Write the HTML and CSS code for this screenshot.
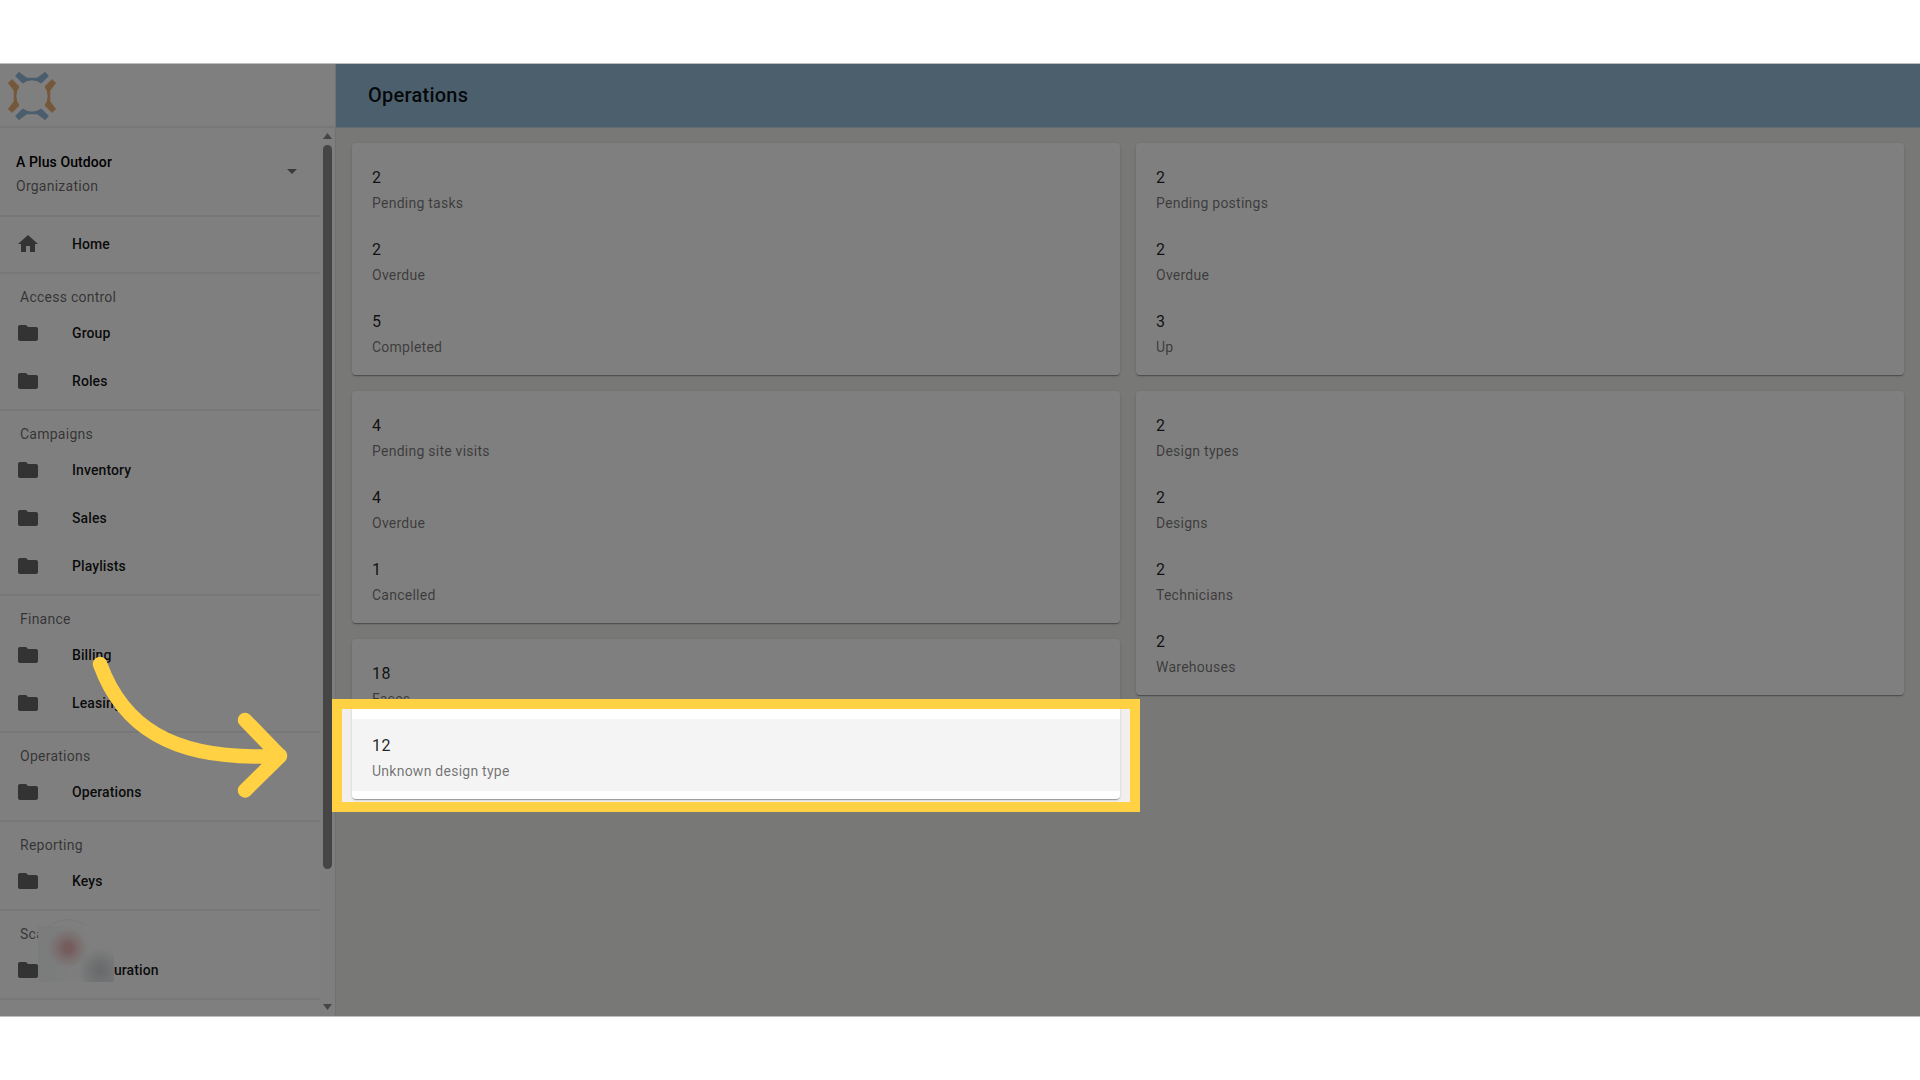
FILE: index.html
```html
<!DOCTYPE html>
<html lang="en">
<head>
<meta charset="utf-8">
<title>Operations</title>
<link rel="stylesheet" href="styles.css">
</head>
<body>
<svg class="defs" width="0" height="0">
  <symbol id="folder" viewBox="0 0 24 24"><path d="M10 4H4c-1.1 0-2 .9-2 2v12c0 1.100.9 2 2 2h16c1.100 0 2-.9 2-2V8c0-1.100-.9-2-2-2h-8l-2-2z"/></symbol>
  <symbol id="home" viewBox="0 0 24 24"><path d="M10 20v-6h4v6h5v-8h3L12 3 2 12h3v8z"/></symbol>
</svg>
<div class="app">
  <aside class="sidebar">
    <div class="brand">
      <svg class="logo" width="50" height="50" viewBox="-25 -25 50 50">
        <defs><path id="arm" d="M-13 -23.200L-5.600 -17.600H5.600L13 -23.200L15.900 -20L9.300 -13.400A16.200 16.200 0 0 0 -9.300 -13.400L-15.900 -20Z"/></defs>
        <g stroke-width="1.400" stroke-linejoin="round">
          <use href="#arm" class="logo-blue"/>
          <use href="#arm" class="logo-blue" transform="rotate(180)"/>
          <use href="#arm" class="logo-orange" transform="rotate(90)"/>
          <use href="#arm" class="logo-orange" transform="rotate(270)"/>
        </g>
      </svg>
    </div>
    <div class="side-body">
      <nav class="nav">
        <div class="org">
          <div class="org-text">
            <div class="org-name">A Plus Outdoor</div>
            <div class="org-kind">Organization</div>
          </div>
          <svg class="caret" width="10" height="5"><path d="M0 0H10L5 5Z"/></svg>
        </div>
        <section class="group home"><a class="row"><svg class="icon"><use href="#home"/></svg>Home</a></section>
        <section class="group"><h2>Access control</h2>
          <a class="row"><svg class="icon"><use href="#folder"/></svg>Group</a>
          <a class="row"><svg class="icon"><use href="#folder"/></svg>Roles</a></section>
        <section class="group"><h2>Campaigns</h2>
          <a class="row"><svg class="icon"><use href="#folder"/></svg>Inventory</a>
          <a class="row"><svg class="icon"><use href="#folder"/></svg>Sales</a>
          <a class="row"><svg class="icon"><use href="#folder"/></svg>Playlists</a></section>
        <section class="group"><h2>Finance</h2>
          <a class="row"><svg class="icon"><use href="#folder"/></svg>Billing</a>
          <a class="row"><svg class="icon"><use href="#folder"/></svg>Leasing</a></section>
        <section class="group"><h2>Operations</h2>
          <a class="row"><svg class="icon"><use href="#folder"/></svg>Operations</a></section>
        <section class="group"><h2>Reporting</h2>
          <a class="row"><svg class="icon"><use href="#folder"/></svg>Keys</a></section>
        <section class="group"><h2>Sca</h2>
          <a class="row"><svg class="icon"><use href="#folder"/></svg>Configuration</a></section>
      </nav>
      <div class="scrollbar">
        <svg width="9" height="6"><path d="M0 6H9L4.500 0Z"/></svg>
        <div class="thumb"></div>
        <svg width="9" height="6"><path d="M0 0H9L4.500 6Z"/></svg>
      </div>
    </div>
  </aside>
  <div class="content">
    <header class="toolbar"><h1>Operations</h1></header>
    <main class="board">
      <div class="column">
        <div class="card">
          <div class="stat"><b>2</b><span>Pending tasks</span></div>
          <div class="stat"><b>2</b><span>Overdue</span></div>
          <div class="stat"><b>5</b><span>Completed</span></div>
        </div>
        <div class="card">
          <div class="stat"><b>4</b><span>Pending site visits</span></div>
          <div class="stat"><b>4</b><span>Overdue</span></div>
          <div class="stat"><b>1</b><span>Cancelled</span></div>
        </div>
        <div class="card">
          <div class="stat"><b>18</b><span>Faces</span></div>
          <div class="stat hovered"><b>12</b><span>Unknown design type</span></div>
        </div>
      </div>
      <div class="column">
        <div class="card">
          <div class="stat"><b>2</b><span>Pending postings</span></div>
          <div class="stat"><b>2</b><span>Overdue</span></div>
          <div class="stat"><b>3</b><span>Up</span></div>
        </div>
        <div class="card">
          <div class="stat"><b>2</b><span>Design types</span></div>
          <div class="stat"><b>2</b><span>Designs</span></div>
          <div class="stat"><b>2</b><span>Technicians</span></div>
          <div class="stat"><b>2</b><span>Warehouses</span></div>
        </div>
      </div>
    </main>
  </div>
  <div class="ring"></div>
  <div class="smudge"></div>
  <div class="spotlight"></div>
  <svg class="arrow" width="220" height="160" viewBox="80 650 220 160">
    <path d="M100 664C121 722 168 763 280 755.500M245 720L280 756L245 790.500"/>
  </svg>
</div>
</body>
</html>
```
FILE: styles.css
```css
* { box-sizing: border-box; }
body { margin: 0; padding-top: 63px; background: #fff; font-family: Roboto, "Liberation Sans", sans-serif; height: 1080px; overflow: hidden; }
.defs { position: absolute; }
.app { position: relative; display: flex; height: 954px; overflow: hidden; background: #fff; border-top: 1px solid #bfbfbf; border-bottom: 1px solid #bfbfbf; }

.sidebar { width: 336px; flex: none; display: flex; flex-direction: column; border-right: 1px solid #e3e3e3; }
.brand { height: 64px; flex: none; padding: 7px; border-bottom: 2px solid #efefef; }
.logo { display: block; }
.logo-blue { fill: #94bad8; stroke: #94bad8; }
.logo-orange { fill: #eab173; stroke: #eab173; }
.side-body { flex: 1; min-height: 0; display: flex; }
.nav { flex: 1; overflow: hidden; }
.org { height: 89px; display: flex; justify-content: space-between; align-items: center; padding: 0 23px 0 16px; border-bottom: 2px solid #efefef; }
.org-text { padding-top: 5px; font-size: 14px; line-height: 24px; }
.org-name { font-weight: 500; letter-spacing: .1px; }
.org-kind { color: rgba(0,0,0,.6); letter-spacing: .25px; }
.caret { fill: rgba(0,0,0,.54); }
.group { padding-bottom: 4px; border-bottom: 2px solid #efefef; }
.home { padding: 3px 0 4px; }
.group h2 { margin: 0; height: 35px; padding: 10.5px 0 0 20px; font-size: 14px; line-height: 24px; font-weight: 400; letter-spacing: .25px; color: rgba(0,0,0,.6); }
.row { display: flex; align-items: center; gap: 32px; height: 48px; padding: 0 16px; font-size: 14px; line-height: 22px; font-weight: 500; letter-spacing: .1px; color: rgba(0,0,0,.92); }
.icon { width: 24px; height: 24px; fill: rgba(0,0,0,.6); }
.scrollbar { width: 15px; flex: none; display: flex; flex-direction: column; align-items: center; padding: 5px 0 6px; background: #fcfcfc; fill: #8b8b8b; }
.thumb { width: 9px; height: 724px; margin: 6px 0 auto; border-radius: 5px; background: #8b8b8b; }

.content { flex: 1; display: flex; flex-direction: column; background: #f1f0ef; }
.toolbar { height: 64px; flex: none; display: flex; align-items: center; padding: 0 32px 1px; background: #98bedb; border-bottom: 1px solid #c4d7e5; }
.toolbar h1 { margin: 0; font-size: 20px; font-weight: 500; letter-spacing: .25px; color: rgba(0,0,0,.92); }
.board { display: flex; gap: 16px; padding: 15px 16px 16px; }
.column { flex: 1; display: flex; flex-direction: column; gap: 16px; }
.card { padding: 8px 0; border-radius: 4px; background: #fff; box-shadow: 0 2px 1px -1px rgba(0,0,0,.2), 0 1px 1px rgba(0,0,0,.14), 0 1px 3px rgba(0,0,0,.12); }
.stat { height: 72px; padding: 15px 20px 0; display: flex; flex-direction: column; }
.stat b { font-size: 16px; line-height: 24px; font-weight: 400; letter-spacing: .5px; color: rgba(0,0,0,.87); }
.stat span { padding-top: 1px; font-size: 14px; line-height: 24px; letter-spacing: .25px; color: rgba(0,0,0,.55); }
.hovered { background: #f4f4f4; }

/* blurred patch over the corner badge */
.ring { position: absolute; left: 39px; top: 855px; width: 58px; height: 58px; border: 1px solid #f0f0f0; border-radius: 50%; }
.smudge { position: absolute; left: 38px; top: 862px; width: 76px; height: 56px; background:
  radial-gradient(circle at 30px 22px, rgba(226,150,153,.65) 0 4px, rgba(232,160,163,.35) 11px, transparent 20px),
  radial-gradient(circle at 62px 44px, rgba(205,210,212,.85) 0 3px, transparent 22px),
  linear-gradient(90deg, #f4f6f6, #fdfdfd 50%, transparent 80%),
  linear-gradient(#fff, #fdfdfd 55%, #eef2f3); }

.spotlight { position: absolute; left: 332px; top: 635px; width: 808px; height: 113px; border: 10px solid #ffd143; box-shadow: 0 0 0 2000px rgba(0,0,0,.5); }
.arrow { position: absolute; left: 80px; top: 586px; fill: none; stroke: #ffd143; stroke-width: 14.500; stroke-linecap: round; stroke-linejoin: round; }
```
